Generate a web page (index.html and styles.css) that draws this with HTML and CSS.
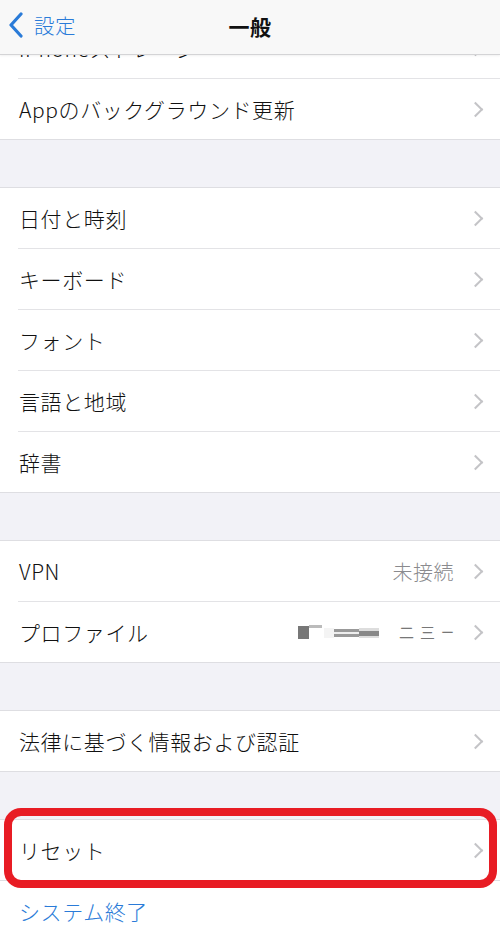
FILE: index.html
```html
<!DOCTYPE html>
<html lang="ja">
<head>
<meta charset="utf-8">
<link rel="stylesheet" href="styles.css">
</head>
<body>
<div class="screen">
  <header class="nav">
    <div class="back">
      <svg class="back-icon" width="16" height="26" viewBox="0 0 16 26"><polyline points="13,2 3,13 13,24" fill="none" stroke="#2a7bd8" stroke-width="3.2" stroke-linecap="round" stroke-linejoin="round"/></svg>
      <span class="back-label">設定</span>
    </div>
    <div class="title">一般</div>
  </header>

  <main class="viewport">
    <div class="content">
      <section class="group first">
        <div class="row"><span class="label">iPhoneストレージ</span><span class="chev"></span></div>
        <div class="row"><span class="label">Appのバックグラウンド更新</span><span class="chev"></span></div>
      </section>

      <section class="group">
        <div class="row"><span class="label">日付と時刻</span><span class="chev"></span></div>
        <div class="row"><span class="label">キーボード</span><span class="chev"></span></div>
        <div class="row"><span class="label">フォント</span><span class="chev"></span></div>
        <div class="row"><span class="label">言語と地域</span><span class="chev"></span></div>
        <div class="row"><span class="label">辞書</span><span class="chev"></span></div>
      </section>

      <section class="group">
        <div class="row"><span class="label">VPN</span><span class="value">未接続</span><span class="chev"></span></div>
        <div class="row">
          <span class="label">プロファイル</span>
          <span class="blur">
            <span class="b b1"></span><span class="b b2"></span>
            <span class="b b3"></span><span class="b b4"></span><span class="b b5"></span>
            <span class="blurtext"><span>二</span><span>三</span><span>ー</span></span>
          </span>
          <span class="chev"></span>
        </div>
      </section>

      <section class="group">
        <div class="row"><span class="label">法律に基づく情報および認証</span><span class="chev"></span></div>
      </section>

      <section class="group highlight">
        <div class="row"><span class="label">リセット</span><span class="chev"></span></div>
      </section>

      <section class="group plain">
        <div class="row"><span class="label link">システム終了</span></div>
      </section>
    </div>
  </main>
</div>
</body>
</html>
```

FILE: styles.css
```css
* { box-sizing: border-box; }
html, body { margin: 0; padding: 0; }
body {
  width: 500px;
  height: 932px;
  overflow: hidden;
  background: #f2f2f7;
  font-family: "Noto Sans CJK JP", "Noto Sans", sans-serif;
  color: #111;
}
.screen { width: 500px; height: 932px; overflow: hidden; display: flex; flex-direction: column; }

.nav {
  flex: 0 0 55px;
  position: relative;
  background: #f8f8f8;
  border-bottom: 1px solid #d4d4d6;
  box-shadow: 0 1px 2px rgba(0,0,0,0.06);
  z-index: 5;
  display: flex;
  align-items: center;
  justify-content: center;
}
.back {
  position: absolute;
  left: 8px; top: 12px;
  display: flex;
  align-items: center;
  gap: 10px;
  color: #2a7bd8;
}
.back-icon { display: block; }
.back-label { font-size: 20.5px; line-height: 26px; letter-spacing: 0.5px; font-weight: 300; }
.title { font-size: 21px; font-weight: 700; color: #111; margin-top: -2px; letter-spacing: 0.5px; }

.viewport { flex: 1; overflow: hidden; }
.content { margin-top: -37px; }

.group {
  background: #fff;
  border-top: 1px solid #dedee2;
  border-bottom: 1px solid #dedee2;
  margin-bottom: 47px;
}
.group.first { border-top: none; }

.row {
  height: 61px;
  display: flex;
  align-items: center;
  padding: 0 18px 0 19px;
  position: relative;
}
.row + .row::before {
  content: "";
  position: absolute;
  top: 0; left: 18px; right: 0;
  height: 1px;
  background: #e3e3e6;
}
.group .row:first-child { height: 60px; }
.label { flex: 1; font-size: 21px; line-height: 28px; letter-spacing: 0.6px; font-weight: 300; }
.value { font-size: 20px; color: #8a8a8e; margin-right: 17px; letter-spacing: 0.5px; font-weight: 300; }
.chev {
  width: 10px; height: 16px;
  position: relative;
  margin-right: 1px;
}
.chev::before {
  content: "";
  position: absolute;
  left: -1px; top: 3px;
  width: 9px; height: 9px;
  border-top: 2.2px solid #c4c4c7;
  border-right: 2.2px solid #c4c4c7;
  transform: rotate(45deg);
}

.blur { display: flex; align-items: center; margin-right: 17px; height: 20px; }
.b { display: inline-block; flex: none; }
.b1 { width: 11px; height: 13px; background: #777; margin-top: 2px; }
.b2 { width: 13px; height: 3px; background: #bbb; align-self: flex-start; margin-top: 3px; }
.b3 { width: 10px; height: 10px; background: #f4f4f4; margin-left: 2px; margin-top: 2px; }
.b4 { width: 25px; height: 8px; background: linear-gradient(#999 0 35%, #eee 35% 60%, #999 60%); margin-top: 3px; }
.b5 { width: 20px; height: 10px; background: linear-gradient(#ddd 0 30%, #888 30% 80%, #ddd 80%); margin-right: 20px; margin-top: 2px; }
.blurtext { display: flex; gap: 6px; font-size: 15px; color: #777; line-height: 20px; white-space: nowrap; }
.blurtext span:last-child { font-size: 13px; }

.highlight { position: relative; margin-top: 1px; }
.highlight::after {
  content: "";
  position: absolute;
  top: -12px; left: 4px; right: 3px; bottom: -8px;
  border: 8px solid #e81c24;
  border-radius: 17px;
  pointer-events: none;
}
.plain { border-top: none; border-bottom: none; margin-top: -47px; margin-bottom: 0; }
.link { color: #2a7bd8; }
```
